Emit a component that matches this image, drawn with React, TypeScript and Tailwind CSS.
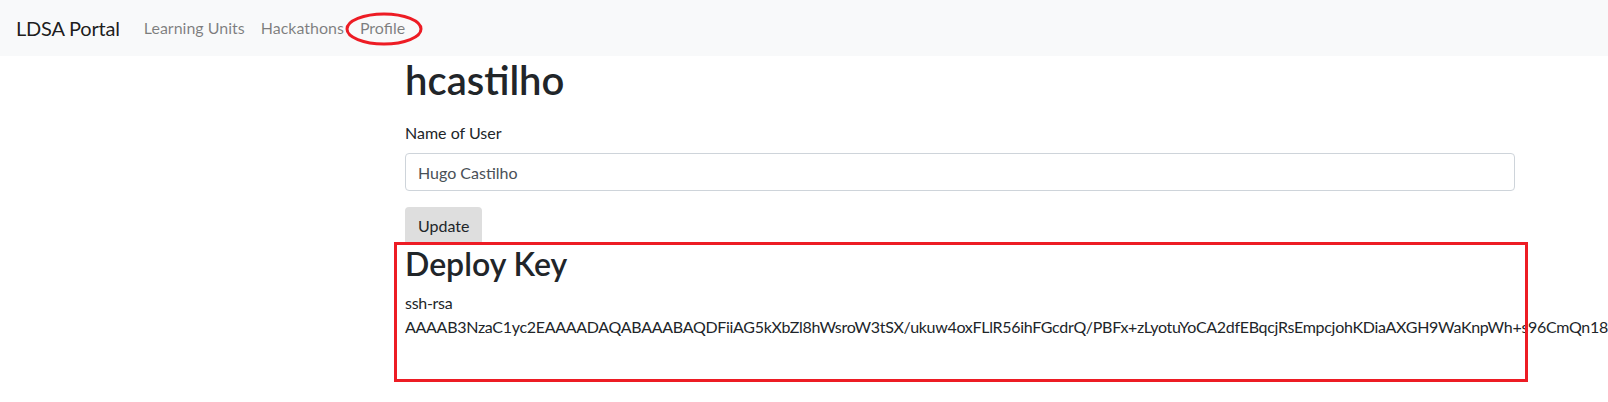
import React from "react"

const font = { fontFamily: '"Lato", "Segoe UI", "Liberation Sans", sans-serif' }

const KEY =
    "AAAAB3NzaC1yc2EAAAADAQABAAABAQDFiiAG5kXbZl8hWsroW3tSX/ukuw4oxFLlR56ihFGcdrQ/PBFx+zLyotuYoCA2dfEBqcjRsEmpcjohKDiaAXGH9WaKnpWh+s96CmQn18gR3vKpT2xWq7LmZ0yUeN4bHc"

function Navbar() {
    return (
        <nav className="relative flex h-[56px] items-center bg-[#f8f9fa] px-4">
            <span className="mr-4 text-[20px] leading-[30px] tracking-[-0.2px] text-black/90">LDSA Portal</span>
            <div className="flex text-[16px] leading-6 text-black/50">
                <span className="px-2">Learning Units</span>
                <span className="px-2">Hackathons</span>
                <span className="px-2">Profile</span>
            </div>
            {/* hand drawn annotation round the Profile link */}
            <svg className="pointer-events-none absolute left-[344px] top-[11px]" width="80" height="36" viewBox="0 0 80 36">
                <ellipse cx="40" cy="18" rx="37" ry="15" fill="none" stroke="#ed1c24" strokeWidth="3" />
            </svg>
        </nav>
    )
}

export default function App() {
    return (
        <div className="relative min-h-[402px] w-[1608px] overflow-hidden bg-white text-[#212529]" style={font}>
            <Navbar />
            <div className="ml-[390px] w-[1140px] px-[15px]">
                <h1 className="mb-[17px] text-[40px] font-semibold leading-[48px]">hcastilho</h1>
                <form>
                    <div className="mb-4">
                        <label className="mb-2 block text-[16px] leading-6">Name of User</label>
                        <input
                            className="block h-[38px] w-full rounded border border-[#ced4da] px-3 text-[16px] text-[#495057] outline-none"
                            defaultValue="Hugo Castilho"
                            style={font}
                        />
                    </div>
                    <button type="button" className="h-[38px] rounded bg-[#dedede] px-[13px] text-[16px] leading-6 text-[#212529]" style={font}>
                        Update
                    </button>
                </form>
                <h2 className="mb-2 text-[32px] font-semibold leading-[38px]">Deploy Key</h2>
                <p className="text-[16px] leading-6 tracking-[-0.3px]">
                    ssh-rsa {KEY}
                </p>
            </div>
            {/* annotation box round the deploy key */}
            <div className="pointer-events-none absolute left-[394px] top-[242px] h-[140px] w-[1134px] border-[3px] border-[#ed1c24]" />
        </div>
    )
}
